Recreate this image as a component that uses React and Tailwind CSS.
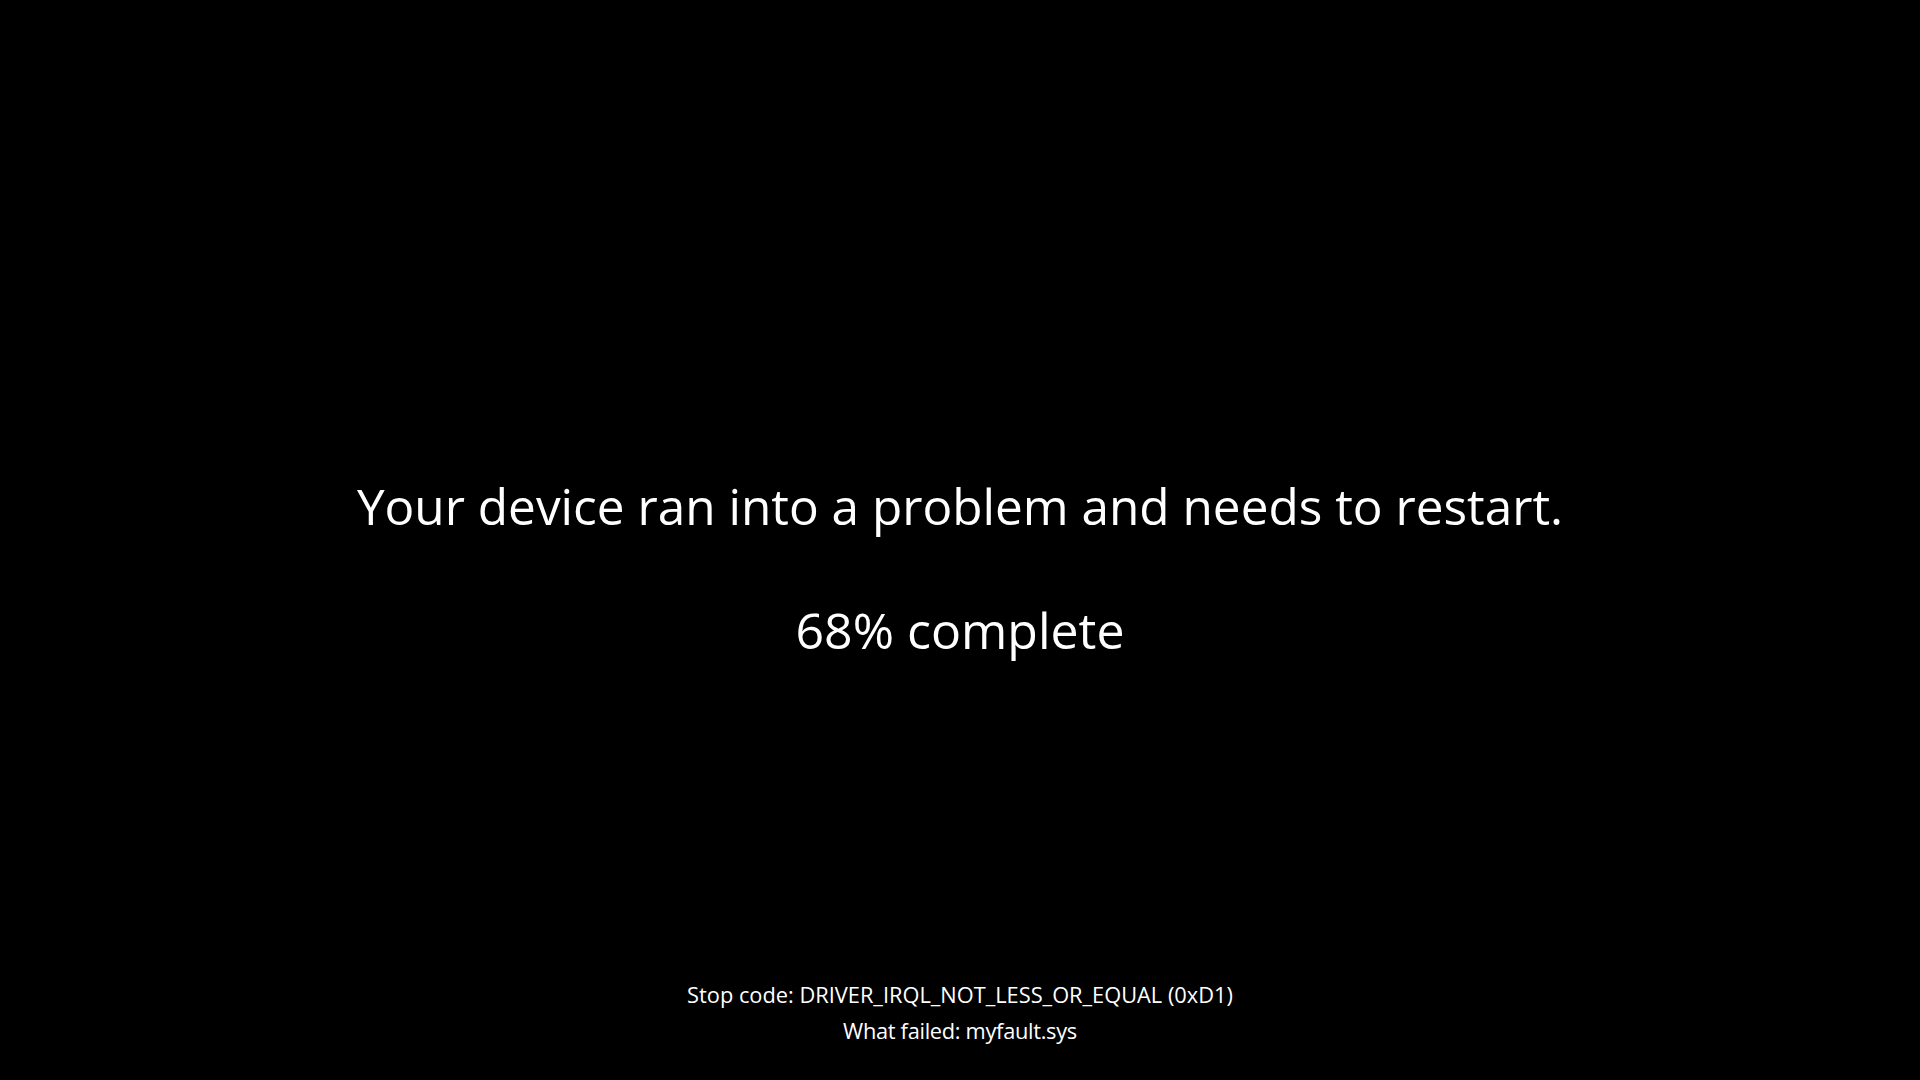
import React from 'react';

const App = () => {
  return (
    <div
      className="w-full h-screen bg-black text-white flex flex-col items-center overflow-hidden"
      style={{ fontFamily: '"Open Sans", "Noto Sans", sans-serif' }}
    >
      {/* Main message */}
      <div className="pt-[476px] flex flex-col items-center">
        <h1 className="text-[49.5px] leading-[60px] font-normal">
          Your device ran into a problem and needs to restart.
        </h1>
        <p className="mt-16 text-[50px] leading-[60px] font-normal">68% complete</p>
      </div>

      {/* Stop code details */}
      <div className="mt-auto pb-[31px] flex flex-col items-center text-[21.8px] leading-[36px]">
        <p>Stop code: DRIVER_IRQL_NOT_LESS_OR_EQUAL (0xD1)</p>
        <p className="tracking-[-0.3px]">What failed: myfault.sys</p>
      </div>
    </div>
  );
};

export default App;
